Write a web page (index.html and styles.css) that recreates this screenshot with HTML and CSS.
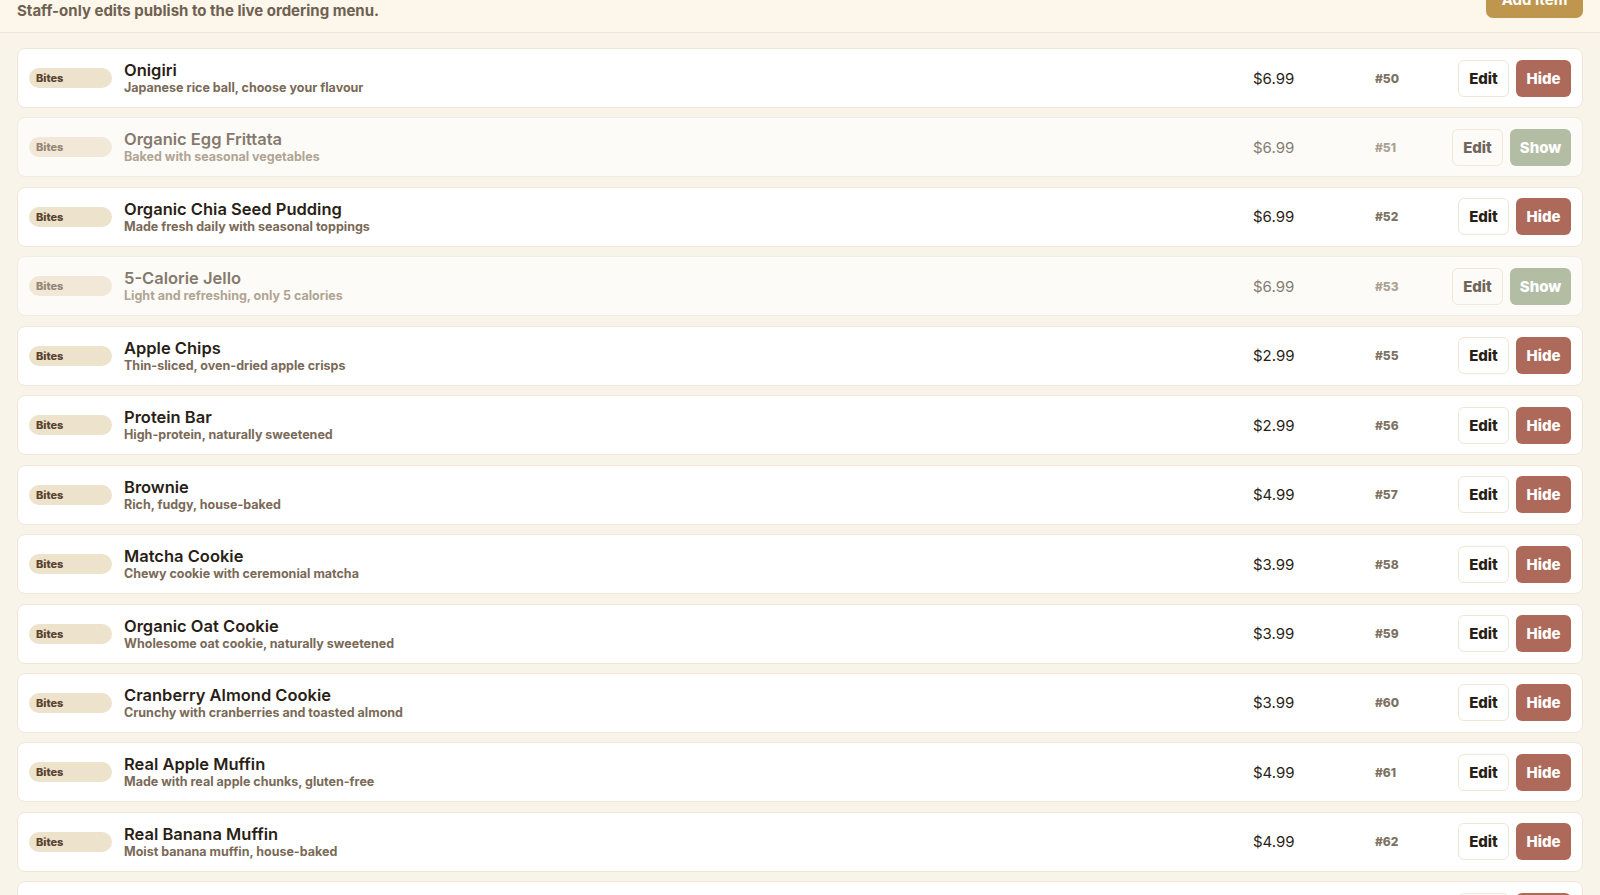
FILE: index.html
```html
<!DOCTYPE html>
<html lang="en">
<head>
<meta charset="utf-8">
<title>Menu Items</title>
<link rel="stylesheet" href="styles.css">
</head>
<body>
<div class="page">
  <header class="head">
    <p class="sub">Staff-only edits publish to the live ordering menu.</p>
    <button class="btn-add">Add Item</button>
  </header>
  <main class="list">
    <div class="row"><span class="badge">Bites</span><div class="info"><div class="name">Onigiri</div><div class="desc">Japanese rice ball, choose your flavour</div></div><div class="price">$6.99</div><div class="id">#50</div><div class="actions"><button class="btn-edit">Edit</button><button class="btn-hide">Hide</button></div></div>
    <div class="row off"><span class="badge">Bites</span><div class="info"><div class="name">Organic Egg Frittata</div><div class="desc">Baked with seasonal vegetables</div></div><div class="price">$6.99</div><div class="id">#51</div><div class="actions"><button class="btn-edit">Edit</button><button class="btn-show">Show</button></div></div>
    <div class="row"><span class="badge">Bites</span><div class="info"><div class="name">Organic Chia Seed Pudding</div><div class="desc">Made fresh daily with seasonal toppings</div></div><div class="price">$6.99</div><div class="id">#52</div><div class="actions"><button class="btn-edit">Edit</button><button class="btn-hide">Hide</button></div></div>
    <div class="row off"><span class="badge">Bites</span><div class="info"><div class="name">5-Calorie Jello</div><div class="desc">Light and refreshing, only 5 calories</div></div><div class="price">$6.99</div><div class="id">#53</div><div class="actions"><button class="btn-edit">Edit</button><button class="btn-show">Show</button></div></div>
    <div class="row"><span class="badge">Bites</span><div class="info"><div class="name">Apple Chips</div><div class="desc">Thin-sliced, oven-dried apple crisps</div></div><div class="price">$2.99</div><div class="id">#55</div><div class="actions"><button class="btn-edit">Edit</button><button class="btn-hide">Hide</button></div></div>
    <div class="row"><span class="badge">Bites</span><div class="info"><div class="name">Protein Bar</div><div class="desc">High-protein, naturally sweetened</div></div><div class="price">$2.99</div><div class="id">#56</div><div class="actions"><button class="btn-edit">Edit</button><button class="btn-hide">Hide</button></div></div>
    <div class="row"><span class="badge">Bites</span><div class="info"><div class="name">Brownie</div><div class="desc">Rich, fudgy, house-baked</div></div><div class="price">$4.99</div><div class="id">#57</div><div class="actions"><button class="btn-edit">Edit</button><button class="btn-hide">Hide</button></div></div>
    <div class="row"><span class="badge">Bites</span><div class="info"><div class="name">Matcha Cookie</div><div class="desc">Chewy cookie with ceremonial matcha</div></div><div class="price">$3.99</div><div class="id">#58</div><div class="actions"><button class="btn-edit">Edit</button><button class="btn-hide">Hide</button></div></div>
    <div class="row"><span class="badge">Bites</span><div class="info"><div class="name">Organic Oat Cookie</div><div class="desc">Wholesome oat cookie, naturally sweetened</div></div><div class="price">$3.99</div><div class="id">#59</div><div class="actions"><button class="btn-edit">Edit</button><button class="btn-hide">Hide</button></div></div>
    <div class="row"><span class="badge">Bites</span><div class="info"><div class="name">Cranberry Almond Cookie</div><div class="desc">Crunchy with cranberries and toasted almond</div></div><div class="price">$3.99</div><div class="id">#60</div><div class="actions"><button class="btn-edit">Edit</button><button class="btn-hide">Hide</button></div></div>
    <div class="row"><span class="badge">Bites</span><div class="info"><div class="name">Real Apple Muffin</div><div class="desc">Made with real apple chunks, gluten-free</div></div><div class="price">$4.99</div><div class="id">#61</div><div class="actions"><button class="btn-edit">Edit</button><button class="btn-hide">Hide</button></div></div>
    <div class="row"><span class="badge">Bites</span><div class="info"><div class="name">Real Banana Muffin</div><div class="desc">Moist banana muffin, house-baked</div></div><div class="price">$4.99</div><div class="id">#62</div><div class="actions"><button class="btn-edit">Edit</button><button class="btn-hide">Hide</button></div></div>
    <div class="row"><span class="badge">Bites</span><div class="info"><div class="name">Real Blueberry Muffin</div><div class="desc">Bursting with blueberries, house-baked</div></div><div class="price">$4.99</div><div class="id">#63</div><div class="actions"><button class="btn-edit">Edit</button><button class="btn-hide">Hide</button></div></div>
  </main>
</div>
</body>
</html>
```
FILE: styles.css
```css
* { box-sizing: border-box; }
html, body { margin: 0; padding: 0; }
body {
  background: #f9f4e9;
  font-family: Inter, "Liberation Sans", sans-serif;
  color: #2a1f17;
  overflow: hidden;
}
.page { margin-top: -20px; }
.head {
  display: flex;
  justify-content: space-between;
  align-items: flex-end;
  padding: 0 17px 12px 17px;
  background: #fdf6ea;
  border-bottom: 1px solid #efe6d6;
}
.sub {
  margin: 0;
  font-size: 15px;
  line-height: 18px;
  font-weight: 700;
  color: #6f6151;
}
.btn-add {
  height: 38px;
  margin-bottom: 2px;
  padding: 0;
  width: 97px;
  white-space: nowrap;
  border: none;
  border-radius: 7px;
  background: #be964e;
  color: #fff;
  font-family: inherit;
  font-size: 15px;
  font-weight: 700;
}
.list {
  padding: 15px 17px 0 17px;
  display: flex;
  flex-direction: column;
  gap: 9.45px;
}
.row {
  height: 60px;
  flex: 0 0 60px;
  display: flex;
  align-items: center;
  padding: 0 11px 0 11px;
  background: #fff;
  border: 1px solid #efe6d6;
  border-radius: 8px;
}
.badge {
  flex: 0 0 83px;
  height: 20px;
  border-radius: 10px;
  background: #ede2cb;
  color: #5a4330;
  font-size: 11px;
  font-weight: 800;
  line-height: 20px;
  padding-left: 7px;
  margin-right: 12px;
}
.info { flex: 1; min-width: 0; }
.name {
  font-size: 16.5px;
  line-height: 19px;
  font-weight: 600;
  color: #2a1f17;
}
.desc {
  font-size: 12.5px;
  line-height: 15px;
  font-weight: 700;
  color: #7a6a58;
}
.price {
  flex: 0 0 122px;
  font-size: 15px;
  color: #2a1f17;
}
.id {
  flex: 0 0 70px;
  font-size: 12px;
  font-weight: 800;
  color: #7d7162;
}
.actions {
  flex: 0 0 126px;
  display: flex;
  justify-content: flex-end;
  gap: 7px;
}
.actions button {
  height: 37px;
  border-radius: 6px;
  font-family: inherit;
  font-size: 15px;
  font-weight: 800;
  padding: 0;
}
.btn-edit {
  width: 51px;
  background: #fff;
  border: 1px solid #efe6d6;
  color: #2a1f17;
}
.btn-hide {
  width: 55px;
  border: none;
  background: #ad6a5a;
  color: #fff;
}
.btn-show {
  width: 61px;
  border: none;
  background: #b3bda4;
  color: #fff;
}
.row.off {
  background: #fdfbf7;
  border-color: #f2ebdf;
}
.row.off .badge { background: #f1e8d8; color: #958574; }
.row.off .name { color: #857a6e; }
.row.off .desc { color: #b0a493; }
.row.off .price { color: #857d74; }
.row.off .id { color: #aaa093; }
.row.off .btn-edit { background: #fdfbf7; color: #6f655a; border-color: #f2e8da; }
```
